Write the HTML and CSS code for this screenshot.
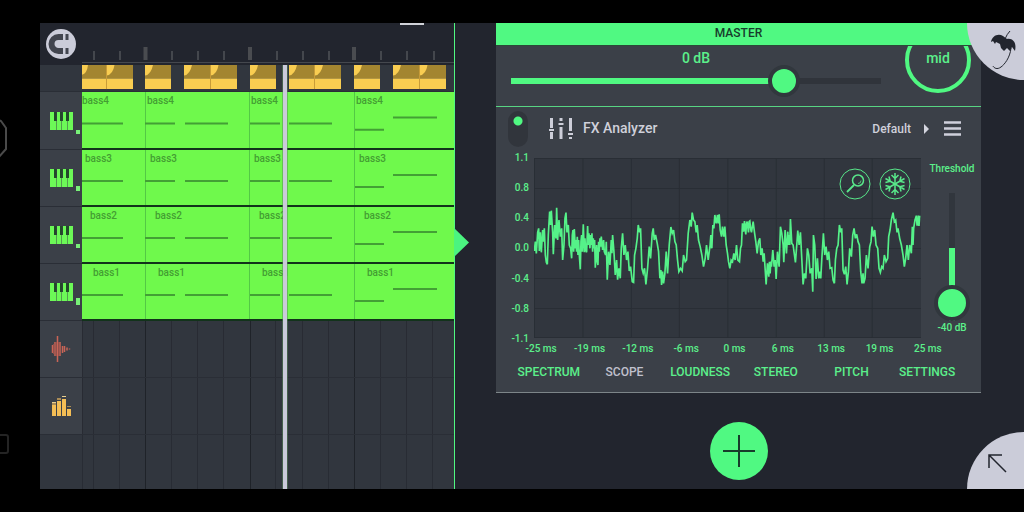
FILE: index.html
```html
<!DOCTYPE html>
<html lang="en">
<head>
<meta charset="utf-8">
<meta name="viewport" content="width=device-width, initial-scale=1">
<title>Playlist and master effects</title>
<link rel="stylesheet" href="styles.css">
</head>
<body>
<svg class="defs" aria-hidden="true">
  <symbol id="piano" viewBox="0 0 23 18">
    <path fill="#6cf957" d="M0 0h4v9h2v9H0zM6.500 9H7V0h4v9h.5v9h-5zM12 9h1V0h4v9h0v9h-5zM17.500 9h1V0H23v18h-5.500z"/>
    <path fill="#23472b" d="M4 0h2.500v9H4zM10 0h2.500v9H10zM16 0h3v9h-3z"/>
  </symbol>
  <symbol id="notes" viewBox="0 0 372 55" preserveAspectRatio="none">
    <path stroke="#43a035" stroke-width="2" d="M0 31H41M63 31H93M103 31H146M168 31H198M207 31H250M273 37H302M311 25H355"/>
  </symbol>
  <symbol id="beats" viewBox="0 0 372 57" preserveAspectRatio="none">
    <path stroke="#282c34" d="M.5 0V57M11.500 0V57M37.500 0V57M89.500 0V57M115.500 0V57M141.500 0V57M193.500 0V57M220.500 0V57M246.500 0V57M298.500 0V57M324.500 0V57M350.500 0V57"/>
    <path stroke="#1f2329" d="M63.500 0V57M168.500 0V57M272.500 0V57"/>
  </symbol>
</svg>

<svg class="nav-marks" viewBox="0 0 12 340" aria-hidden="true">
  <path d="M-4 1L1 3L6 10V31L-3 41" fill="none" stroke="#4a4a4a" stroke-width="2"/>
  <rect x="-12" y="317" width="20" height="18" rx="2" fill="none" stroke="#242424" stroke-width="2"/>
</svg>

<main class="app">
  <section class="playlist" aria-label="Playlist">
    <div class="ruler">
      <button class="snap" aria-label="Snap">
        <svg viewBox="0 0 30 30"><path d="M17 8H12.500a7 7 0 0 0 0 14H17" fill="none" stroke="#42454f" stroke-width="6"/><path fill="#42454f" d="M19.500 5h3v6h-3zM19.500 19h3v6h-3z"/></svg>
      </button>
      <svg class="ticks" viewBox="0 0 372 42" preserveAspectRatio="none" aria-hidden="true">
        <path stroke="#44474d" stroke-width="2" d="M12 28V37M38 28V37M90 28V37M116 28V37M142 28V37M195 28V37M221 28V37M247 28V37M299 28V37M325 28V37M352 28V37"/>
        <path stroke="#4a4c50" stroke-width="4" d="M63.500 24V37M168 24V37M272 24V37"/>
        <path stroke="#45484e" stroke-width="1" d="M0 39.500H372"/>
        <path fill="#d0d2d8" d="M318 0h24v2h-24z"/>
      </svg>
    </div>

    <div class="tracks">
      <div class="track auto">
        <div class="head"></div>
        <div class="lane">
          <svg viewBox="0 0 372 27" preserveAspectRatio="none" aria-hidden="true">
            <path fill="#a38530" d="M0 0h51v14H0zM63 0h26v14H63zM102 0h53v14h-53zM168 0h26v14h-26zM207 0h52v14h-52zM272 0h26v14h-26zM311 0h53v14h-53z"/>
            <path fill="#f9cd51" d="M0 14h51v11H0zM63 14h26v11H63zM102 14h53v11h-53zM168 14h26v11h-26zM207 14h52v11h-52zM272 14h26v11h-26zM311 14h53v11h-53z"/>
            <path fill="#f9cd51" d="M0 0h6Q5 9 0 10zM24.500 0h8Q31 10 24.500 11zM63 0h8Q69 10 63 11zM102 0h8Q108 10 102 11zM128.500 0h8Q135 10 128.500 11zM168 0h8Q174 10 168 11zM207 0h8Q213 10 207 11zM233 0h8Q239 10 233 11zM272 0h8Q278 10 272 11zM311 0h8Q317 10 311 11zM337.500 0h8Q344 10 337.500 11z"/>
            <path stroke="#c79b38" d="M24.500 0V25M128.500 0V25M232.500 0V25M337.500 0V25"/>
          </svg>
        </div>
      </div>

      <div class="track bass4">
        <div class="head"><svg class="piano"><use href="#piano"/></svg><i class="meter"></i></div>
        <div class="lane clips"><span>bass4</span><span>bass4</span><span>bass4</span><span>bass4</span><svg><use href="#notes"/></svg></div>
      </div>
      <div class="track bass3">
        <div class="head"><svg class="piano"><use href="#piano"/></svg><i class="meter mid-level"></i></div>
        <div class="lane clips"><span>bass3</span><span>bass3</span><span>bass3</span><span>bass3</span><svg><use href="#notes"/></svg></div>
      </div>
      <div class="track bass2">
        <div class="head"><svg class="piano"><use href="#piano"/></svg><i class="meter"></i></div>
        <div class="lane clips"><span>bass2</span><span>bass2</span><span>bass2</span><span>bass2</span><svg><use href="#notes"/></svg></div>
      </div>
      <div class="track bass1">
        <div class="head"><svg class="piano"><use href="#piano"/></svg><i class="meter high-level"></i></div>
        <div class="lane clips"><span>bass1</span><span>bass1</span><span>bass1</span><span>bass1</span><svg><use href="#notes"/></svg></div>
      </div>

      <div class="track">
        <div class="head">
          <svg class="wave-icon" viewBox="0 0 20 26"><path stroke="#c96456" stroke-width="1.500" d="M1.500 9V17M4 6V20M6.500 0V26M9 6V20M11.500 10V17M13.500 10V16M16 11.500V14.500M18.500 12.500V13.500"/><path stroke="#a5544e" d="M2.800 8V18M5.200 6V20M7.800 6V20"/></svg>
        </div>
        <div class="lane"><svg><use href="#beats"/></svg></div>
      </div>
      <div class="track">
        <div class="head">
          <svg class="bars-icon" viewBox="0 0 20 20"><path fill="#f3bd55" d="M1 9h4v11H1zM6 5h4v15H6zM11 3h4v17h-4zM16 13h4v7h-4z"/><path fill="#e9cf8f" d="M1 6h4v1H1zM11 0h4v1h-4z"/><path fill="#a98b56" d="M1 7h4v2H1zM6 2h4v2H6zM16 10h4v1h-4z"/></svg>
        </div>
        <div class="lane"><svg><use href="#beats"/></svg></div>
      </div>
      <div class="track rest">
        <div class="head"></div>
        <div class="lane"><svg><use href="#beats"/></svg></div>
      </div>
      <div class="playhead-area"><i class="playhead"></i></div>
    </div>
    <button class="drawer" aria-label="Toggle panel"></button>
  </section>

  <section class="rack" aria-label="Master channel">
    <div class="strip">
      <h1 class="title">MASTER</h1>
      <div class="volume">
        <label class="fader"><span>0 dB</span><input type="range" min="0" max="100" value="76"></label>
        <button class="mid">mid</button>
      </div>

      <div class="fx-head">
        <input class="power" type="checkbox" checked aria-label="Enable effect">
        <svg class="mixer" viewBox="0 0 26 23" aria-hidden="true"><path stroke="#cdced9" stroke-width="3" d="M3.500 1V11M3.500 15V22M13 1V4M13 10V22M22.500 1V14M22.500 20V22"/><path stroke="#cdced9" stroke-width="2" d="M1 13H6M10.500 7H15.500M20 17H25"/></svg>
        <h2>FX Analyzer</h2>
        <button class="preset">Default <svg viewBox="0 0 5 10"><path fill="#d4d5df" d="M0 0l5 5-5 5z"/></svg></button>
        <button class="menu" aria-label="Menu"><svg viewBox="0 0 17 15"><path stroke="#cfd0db" stroke-width="2.500" d="M0 1.500H17M0 7.500H17M0 13.500H17"/></svg></button>
      </div>

      <div class="fx-body">
        <div class="y-axis"><span>1.1</span><span>0.8</span><span>0.4</span><span>0.0</span><span>-0.4</span><span>-0.8</span><span>-1.1</span></div>
        <div class="plot">
          <svg class="scope" viewBox="102 39 1162 540" preserveAspectRatio="none" role="img" aria-label="Oscilloscope trace">
            <path stroke="#292e35" stroke-width="3" fill="none" d="M104 40.500H1264M104 130.500H1264M104 220.500H1264M104 310.500H1264M104 400.500H1264M104 490.500H1264M104 577.500H1264M103.500 39V579M249 39V579M394.500 39V579M538.500 39V579M684 39V579M829.500 39V579M973.500 39V579M1117.500 39V579"/>
            <g fill="none" stroke="#55f289" stroke-width="5">
              <polyline points="103,318 106,290 109,325 113,262 116,250 118,318 121,262 124,322 128,255 131,290 133,250 136,330 139,352 142,358 145,270 149,200 152,240 154,197 158,262 160,328 164,240 168,280 170,188 173,285 177,225 181,275 185,250 188,345 192,300 195,220 198,203 201,262 205,240 208,300 212,310 215,340 217,270 219,255 221,320 223,252 226,310 228,285 230,320 232,275 234,330 236,285 238,330 241,373 243,290 245,270 247,320 250,238 253,322 255,280 257,315 260,322 263,243 265,300 267,265 270,310 272,270 274,300 276,265 278,320 280,280 282,310 284,285 286,368 290,300 292,350 294,360 296,290 298,320 300,280 302,305 304,275 308,315 311,285 313,320 317,330 319,290 322,404 326,320 330,360 334,285 336,325 338,270 342,320 346,390 350,345 353,404 357,370 361,400 364,310 368,265 372,330 376,300 380,345 384,320 388,378 392,365 397,410 401,412 404,330 408,310 412,280 415,240 419,262 422,250 426,370 430,385 434,370 438,418 443,370 448,305 452,340 457,265 460,250 463,285 467,270 472,295 476,320 480,400 483,375 485,420 488,380 491,415 495,385 499,320 503,385 508,300 513,246 517,265 521,255 525,290 529,300 533,345 537,380 542,370 547,378 551,330 556,350 560,345 565,265 570,225 574,245 577,203 581,225 585,230 589,262 592,240 596,285 601,305 606,330 611,365 616,340 620,300 625,345 630,305"/>
              <polyline transform="translate(630)" points="0,310 3,270 6,310 9,240 12,250 15,210 19,235 23,210 25,235 28,208 31,255 35,275 38,245 42,275 45,245 49,300 53,325 56,350 60,370 64,345 68,350 72,325 76,345 80,300 84,345 89,350 92,310 95,300 98,235 101,260 104,228 106,255 108,268 110,235 112,230 116,262 118,230 120,228 123,255 125,262 130,230 134,262 138,290 142,325 146,290 150,280 153,330 157,310 160,350 163,325 169,418 173,355 177,395 179,350 181,385 183,350 185,365 189,315 193,365 196,345 199,402 203,320 208,365 212,245 216,265 220,300 222,352 226,255 230,325 234,260 236,300 238,270 240,300 242,222 246,295 250,300 257,352 261,300 264,257 268,300 272,262 276,340 280,418 284,385 288,400 293,310 297,330 301,385 306,370 309,440 311,270 315,300 319,402 323,340 327,400 331,380 333,400 336,345 341,265 345,330 349,305 353,345 357,320 361,370 366,368 370,405 374,415 377,345 381,310 385,300 389,240 393,262 396,250 400,375 404,388 408,365 412,418 416,380 420,310 425,335 429,270 433,250 437,280 441,268 445,290 449,300 453,380 457,415 460,385 462,415 466,400 470,330 475,370 480,305 484,290 487,245 491,275 495,255 499,300 504,310 508,370 512,382 516,365 520,370 524,330 529,350 534,340 537,275 541,255 545,225 550,203 554,230 558,225 562,262 565,250 570,280 575,300 580,330 584,365 588,340 592,300 596,345 600,300 605,325 608,245 610,300 612,250 616,225 620,212 622,240 624,240 626,212 628,243 630,212"/>
            </g>
          </svg>
          <div class="plot-tools">
            <button aria-label="Zoom"><svg viewBox="0 0 32 32" fill="none" stroke="#58e88a"><circle cx="16" cy="16" r="15"/><circle cx="19" cy="12.500" r="5.500" stroke-width="1.500"/><path d="M15 17L8 24" stroke-width="1.800"/><path d="M19 15.500q3 0 3-3" stroke-width=".8"/></svg></button>
            <button aria-label="Freeze"><svg viewBox="0 0 32 32" fill="none" stroke="#58e88a"><circle cx="16" cy="16" r="15"/><g id="arm" stroke-width="1.500"><path d="M16 5V27M12.500 7L16 10.500L19.500 7M12.500 25L16 21.500L19.500 25"/></g><use href="#arm" transform="rotate(60 16 16)"/><use href="#arm" transform="rotate(120 16 16)"/></svg></button>
          </div>
        </div>
        <label class="threshold"><span>Threshold</span><input type="range" min="-40" max="0" value="-40"><output>-40 dB</output></label>
        <div class="x-axis"><span>-25 ms</span><span>-19 ms</span><span>-12 ms</span><span>-6 ms</span><span>0 ms</span><span>6 ms</span><span>13 ms</span><span>19 ms</span><span>25 ms</span></div>
      </div>

      <nav class="tabs">
        <button>SPECTRUM</button><button class="active">SCOPE</button><button>LOUDNESS</button><button>STEREO</button><button>PITCH</button><button>SETTINGS</button>
      </nav>
    </div>

    <button class="add" aria-label="Add effect"><svg viewBox="0 0 58 58"><path stroke="#173c2b" stroke-width="2" d="M13 29H45M29 13V45"/></svg></button>

    <button class="corner top" aria-label="Home">
      <svg viewBox="0 0 57 57"><path fill="#22252e" d="M24 19C25 13 31 10 36 13L40 16C46 15 50 20 48 28L45 24L43 28L40 25L37 28L34 25L33 21L29 19L28 21L26 18Z"/><path fill="none" stroke="#22252e" d="M38 16Q40 11 43 8M44 25C43 35 37 42 34 44C30 47 27 45 26 43"/></svg>
    </button>
    <button class="corner bottom" aria-label="Expand">
      <svg viewBox="0 0 57 57"><path fill="none" stroke="#22252e" stroke-width="1.500" d="M22 36V23H35M22 23L39 40"/></svg>
    </button>
  </section>
</main>
</body>
</html>
```

FILE: styles.css
```css
:root {
  --green: #50f982;
  --clip: #6ff94c;
  --panel: #3b4048;
  --lane: #31363e;
  --deep: #22252e;
  --light: #cbccd9;
}

* { box-sizing: border-box; }

body {
  position: relative;
  display: flex;
  min-height: 100vh;
  margin: 0;
  padding: 23px 0 23px 40px;
  background: #000;
  font-family: Roboto, "Liberation Sans", sans-serif;
  overflow-x: hidden;
}

button {
  padding: 0;
  border: 0;
  background: none;
  color: inherit;
  font: inherit;
  cursor: pointer;
}

svg { display: block; }
h1, h2 { margin: 0; }

.defs { position: absolute; width: 0; height: 0; }

.nav-marks {
  position: absolute;
  left: 0;
  top: 118px;
  width: 12px;
  height: 340px;
}

.app {
  flex: 1;
  display: grid;
  grid-template-columns: minmax(0, 415fr) minmax(0, 569fr);
  background: var(--deep);
}

/* Playlist */

.playlist {
  position: relative;
  display: flex;
  flex-direction: column;
  border-right: 1px solid var(--green);
}

.ruler {
  display: grid;
  grid-template-columns: 42px 1fr;
  height: 42px;
}

.snap {
  justify-self: center;
  align-self: center;
  width: 30px;
  height: 30px;
  border-radius: 50%;
  background: var(--light);
}

.ticks { width: 100%; height: 42px; }

.tracks {
  position: relative;
  flex: 1;
  display: flex;
  flex-direction: column;
}

.track {
  flex: none;
  display: grid;
  grid-template: minmax(0, 1fr) / 42px 1fr;
  height: 57px;
}

.track.auto { height: 27px; }
.track.bass4 { height: 58px; }
.track.rest { flex: 1 0 54px; height: auto; }

.head {
  display: grid;
  grid-template-columns: 1fr 6px;
  align-items: center;
  justify-items: center;
  padding-left: 6px;
  border-bottom: 1px solid #2a2e36;
  background: var(--panel);
}

.auto .head, .rest .head { background: var(--lane); }

.lane {
  display: grid;
  grid-template-rows: minmax(0, 1fr);
  border-bottom: 1px solid #2a2e36;
  background: var(--lane);
}

.lane svg { width: 100%; height: 0; min-height: 100%; }
.rest .head, .rest .lane { border-bottom: 0; }

.piano { width: 23px; height: 18px; }
.wave-icon { width: 20px; height: 26px; }
.bars-icon { width: 20px; height: 20px; }

.meter {
  align-self: end;
  justify-self: start;
  width: 4px;
  height: 4px;
  margin-bottom: 15px;
  background: #78f078;
}

.mid-level { height: 5px; }
.high-level { height: 7px; }

.clips {
  grid-template: minmax(0, 1fr) / 63fr 104fr 105fr 100fr;
  border-bottom: 2px solid #12331b;
  background: var(--clip);
}

.clips span {
  grid-row: 1;
  padding-left: var(--inset);
  border-left: 1px solid #53c945;
  color: #449e33;
  font-size: 10px;
  font-weight: 500;
  line-height: 18px;
}

.clips span:nth-child(1) { grid-column: 1; padding-left: calc(var(--inset) - 1px); border-left: 0; }
.clips span:nth-child(2) { grid-column: 2; }
.clips span:nth-child(3) { grid-column: 3; }
.clips span:nth-child(4) { grid-column: 4; }
.clips svg { grid-area: 1 / 1 / 2 / 5; }

.bass4 { --inset: 1px; }
.bass3 { --inset: 4px; }
.bass2 { --inset: 9px; }
.bass1 { --inset: 12px; }

.playhead-area {
  position: absolute;
  inset: 0 0 0 42px;
  pointer-events: none;
}

.playhead {
  position: absolute;
  left: 54%;
  top: 0;
  bottom: 0;
  width: 4px;
  background: #cacada;
  box-shadow: 0 0 0 1px #5a8a5a80;
  clip-path: inset(0 -1px);
}

.drawer {
  position: absolute;
  left: 100%;
  top: 205px;
  width: 15px;
  height: 29px;
  background: #4bf480;
  clip-path: polygon(0 0, 100% 50%, 0 100%);
}

/* Rack */

.rack {
  position: relative;
  display: flex;
  flex-direction: column;
  padding: 0 43px 0 41px;
  overflow: hidden;
}

.strip {
  border-bottom: 1px solid #7d8589;
  background: var(--panel);
  color: #5bf08b;
  font-weight: 500;
}

.title {
  height: 22px;
  background: var(--green);
  color: #173c2b;
  font-size: 12px;
  font-weight: 500;
  line-height: 20px;
  text-align: center;
}

.volume {
  display: grid;
  grid-template-columns: 1fr 66px;
  gap: 24px;
  height: 62px;
  padding: 0 10px 0 15px;
  border-top: 1px solid #2b4a38;
  border-bottom: 1px solid #58d583;
  overflow: hidden;
}

.fader {
  display: flex;
  flex-direction: column;
  padding-top: 2px;
  font-size: 14px;
  line-height: 20px;
  text-align: center;
}

input[type="range"] {
  appearance: none;
  margin: 0;
  background: none;
}

.fader input { width: 100%; height: 32px; margin-top: -3px; }

.fader input::-webkit-slider-runnable-track {
  height: 6px;
  background: linear-gradient(90deg, var(--green) 74%, #30343b 74%);
}

input::-webkit-slider-thumb {
  appearance: none;
  border: 4px solid #31373d;
  border-radius: 50%;
  background: var(--green);
}

.fader input::-webkit-slider-thumb { width: 32px; height: 32px; margin-top: -13px; }

.mid {
  width: 66px;
  height: 66px;
  margin-top: -19px;
  padding-bottom: 4px;
  border: 4px solid var(--green);
  border-radius: 50%;
  font-size: 14px;
}

.fx-head {
  display: flex;
  align-items: center;
  height: 43px;
  padding: 0 20px 0 12px;
  color: #cfd0da;
}

.power {
  appearance: none;
  width: 20px;
  height: 36px;
  margin: 0 20px 0 0;
  border-radius: 10px;
  background: radial-gradient(circle at 50% 10px, var(--green) 4px, #31353c 5px);
}

.mixer { width: 26px; height: 23px; margin-right: 9px; }

.fx-head h2 {
  flex: 1;
  padding-bottom: 2px;
  font-size: 14px;
  font-weight: 500;
}

.preset {
  display: flex;
  align-items: center;
  gap: 13px;
  margin-right: 15px;
  font-size: 12px;
}

.preset svg { width: 5px; height: 10px; }
.menu svg { width: 17px; height: 15px; }

.fx-body {
  display: grid;
  grid-template: 188px 22px / 38px 1fr 60px;
  font-size: 10px;
}

.y-axis {
  display: flex;
  flex-direction: column;
  justify-content: space-between;
  height: 196px;
  padding: 1px 5px 0 0;
  line-height: 14px;
  text-align: right;
}

.plot {
  position: relative;
  height: 180px;
  margin-top: 8px;
  background: #31363e;
}

.scope { width: 100%; height: 180px; }

.plot-tools {
  position: absolute;
  top: 10px;
  right: 10px;
  display: flex;
  gap: 8px;
}

.plot-tools svg { width: 32px; height: 32px; }

.threshold {
  display: flex;
  flex-direction: column;
  align-items: center;
  padding: 12px 0 0 2px;
  line-height: 14px;
}

.threshold input {
  writing-mode: vertical-lr;
  direction: rtl;
  width: 36px;
  height: 128px;
  margin-top: 17px;
}

.threshold input::-webkit-slider-runnable-track {
  width: 6px;
  background: linear-gradient(#31363d 43%, var(--green) 43%);
}

.threshold input::-webkit-slider-thumb { width: 36px; height: 36px; margin-left: -15px; }

.x-axis {
  grid-column: 2;
  display: grid;
  grid-template-columns: repeat(9, 1fr);
  margin: 0 -31px 0 -17px;
  line-height: 22px;
  text-align: center;
  white-space: nowrap;
}

.tabs {
  display: grid;
  grid-template-columns: repeat(6, 1fr);
  height: 32px;
  padding: 0 16px 8px 15px;
  font-size: 12px;
}

.tabs .active { color: #c0c1cd; }

.add {
  align-self: center;
  flex: none;
  width: 58px;
  height: 58px;
  margin-top: 29px;
  border-radius: 50%;
  background: var(--green);
}

.corner {
  position: absolute;
  right: 0;
  width: 57px;
  height: 57px;
  background: var(--light);
}

.corner.top { top: 0; border-bottom-left-radius: 100%; }
.corner.bottom { bottom: 0; border-top-left-radius: 100%; }
```
